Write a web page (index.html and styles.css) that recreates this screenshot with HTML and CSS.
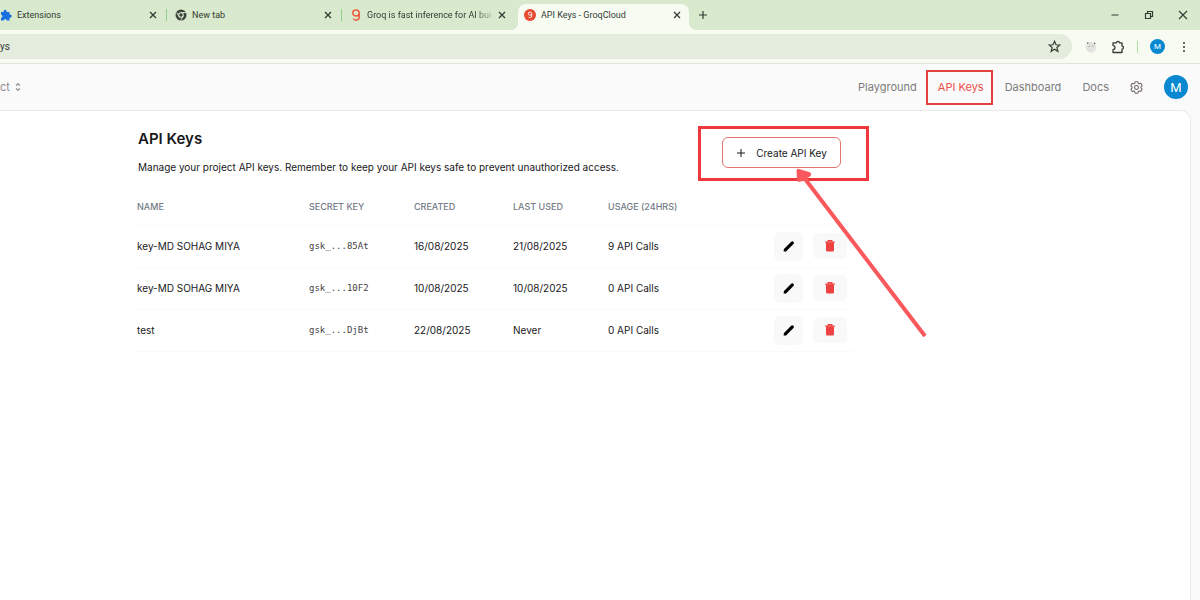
FILE: index.html
```html
<!DOCTYPE html>
<html lang="en">
<head>
<meta charset="utf-8">
<meta name="viewport" content="width=device-width, initial-scale=1">
<title>API Keys - GroqCloud</title>
<link rel="stylesheet" href="styles.css">
</head>
<body>
<svg class="defs" aria-hidden="true">
  <symbol id="close" viewBox="0 0 10 10"><path d="M2 2l6 6M8 2l-6 6" fill="none" stroke="currentColor" stroke-width="1.3"/></symbol>
  <symbol id="pencil" viewBox="0 0 14 14"><path d="M3.400 10.800L10.300 3.900" fill="none" stroke="currentColor" stroke-width="3.200" stroke-linecap="round"/><path d="M1.600 12.500l.6-3 2.500 2.400z" fill="currentColor"/></symbol>
  <symbol id="trash" viewBox="0 0 12 14"><path d="M1.200 3.200h9.600M4.200 3V1.700h3.600V3" fill="none" stroke="currentColor" stroke-width="1.300"/><path d="M2 3.500h8V11q0 1.500-1.500 1.500h-5Q2 12.500 2 11z" fill="currentColor"/></symbol>
</svg>

<header class="browser">
  <div class="tabstrip">
    <div class="tab tab-first">
      <svg class="tab-icon" viewBox="0 0 12 12"><path d="M1 3h2.600a1.600 1.600 0 1 1 3 0H9.500v2.600a1.600 1.600 0 1 1 0 3V11.500H6.700a1.500 1.500 0 0 0-3 0H1V8.700a1.500 1.500 0 0 0 0-3z" fill="#1a6fe0"/></svg>
      <span class="tab-title">Extensions</span>
      <button class="tab-close" aria-label="Close Extensions"><svg><use href="#close"/></svg></button>
    </div>
    <div class="tab">
      <svg class="tab-icon" viewBox="0 0 12 12"><circle cx="6" cy="6" r="5.500" fill="#3b433b"/><circle cx="6" cy="6" r="2.300" fill="none" stroke="#d8e9cd" stroke-width="1.100"/><path d="M6 3.500h5M3.800 7.200L1.600 3.400M8.100 7.300L5.700 11.400" stroke="#d8e9cd" stroke-width=".9"/></svg>
      <span class="tab-title">New tab</span>
      <button class="tab-close" aria-label="Close New tab"><svg><use href="#close"/></svg></button>
    </div>
    <div class="tab tab-plain">
      <svg class="tab-icon" viewBox="0 0 12 12"><path d="M9.200 4a3.200 3 0 1 0-6.400 0a3.200 3 0 1 0 6.400 0V8a3.200 3.200 0 0 1-6 1.500" fill="none" stroke="#ee5a40" stroke-width="1.500"/></svg>
      <span class="tab-title tab-fade">Groq is fast inference for AI bui</span>
      <button class="tab-close" aria-label="Close Groq"><svg><use href="#close"/></svg></button>
    </div>
    <div class="tab tab-active">
      <svg class="tab-icon" viewBox="0 0 12 12"><circle cx="6" cy="6" r="6" fill="#e9492f"/><path d="M7.700 4.600a1.700 1.600 0 1 0-3.400 0a1.700 1.600 0 1 0 3.400 0V7a1.700 1.700 0 0 1-3.200.8" fill="none" stroke="#fff" stroke-width=".9"/></svg>
      <span class="tab-title">API Keys - GroqCloud</span>
      <button class="tab-close" aria-label="Close API Keys"><svg><use href="#close"/></svg></button>
    </div>
    <button class="new-tab" aria-label="New tab"><svg viewBox="0 0 10 10"><path d="M5 1v8M1 5h8" stroke="currentColor" stroke-width="1.200"/></svg></button>
    <div class="window-controls">
      <button aria-label="Minimize"><svg viewBox="0 0 10 10"><path d="M1.500 5h7" stroke="currentColor"/></svg></button>
      <button aria-label="Restore"><svg viewBox="0 0 10 10"><path d="M1.500 3.500h5v5h-5zM3.500 3.300V1.500h5v5H6.700" fill="none" stroke="currentColor" stroke-width="1.200"/></svg></button>
      <button aria-label="Close window"><svg viewBox="0 0 10 10"><path d="M1 1l8 8M9 1L1 9" stroke="currentColor" stroke-width="1.100"/></svg></button>
    </div>
  </div>
  <div class="toolbar">
    <div class="address">
      <span class="url">ys</span>
      <button aria-label="Bookmark"><svg viewBox="0 0 12 12"><path d="M6 1.200l1.400 3.200 3.500.3-2.700 2.300.9 3.500L6 8.600l-3.100 1.900.9-3.500L1.100 4.700l3.500-.3z" fill="none" stroke="currentColor" stroke-width="1.100"/></svg></button>
    </div>
    <div class="tools">
      <button class="tool-face" aria-label="Extension"><svg viewBox="0 0 12 12"><circle cx="6" cy="6.200" r="5.400" fill="#e3e4df"/><path d="M2 2.200h1.300M9 2.400h1.300" stroke="#555855" stroke-width="1.300"/><path d="M3.500 5.500h1M7.300 5h1.200" stroke="#8b8e89" stroke-width="1.100"/></svg></button>
      <button class="tool-puzzle" aria-label="Extensions menu"><svg viewBox="0 0 14 14"><path d="M2 2.800h3.500a1.500 1.500 0 0 1 3 0H11v3.300a1.500 1.500 0 0 1 0 3V12.500H2V9.600a2 2 0 0 0 0-4z" fill="none" stroke="currentColor" stroke-width="1.300" stroke-linejoin="round"/></svg></button>
      <span class="tool-divider"></span>
      <button class="avatar avatar-small">M</button>
      <button class="tool-menu" aria-label="Browser menu"><svg viewBox="0 0 4 12"><circle cx="2" cy="2" r="1"/><circle cx="2" cy="6" r="1"/><circle cx="2" cy="10" r="1"/></svg></button>
    </div>
  </div>
</header>

<div class="app">
  <div class="app-header">
    <button class="project">ct<svg viewBox="0 0 8 12"><path d="M2 4.500l2-1.800 2 1.800M2 7.500l2 1.800 2-1.800" fill="none" stroke="currentColor" stroke-width="1.200"/></svg></button>
    <nav class="nav">
      <a href="#">Playground</a>
      <a href="#" class="current">API Keys<span class="mark mark-nav"></span></a>
      <a href="#">Dashboard</a>
      <a href="#">Docs</a>
      <button class="settings" aria-label="Settings"><svg viewBox="2 2 20 20"><path d="M9.600 3.900c.1-.5.5-.9 1.100-.9h2.600c.5 0 1 .4 1.100.9l.2 1.300c.1.400.3.700.6.900l.2.100c.3.200.7.200 1.100.1l1.200-.5c.5-.2 1.100 0 1.400.5l1.300 2.200c.3.500.2 1.100-.3 1.400l-1 .8c-.3.200-.4.600-.4 1v.3c0 .4.100.8.400 1l1 .8c.4.300.5.900.3 1.400l-1.300 2.200c-.3.500-.9.700-1.400.5l-1.200-.5c-.4-.1-.8-.1-1.100.1l-.2.100c-.3.200-.5.500-.6.900l-.2 1.300c-.1.500-.6.900-1.100.9h-2.600c-.6 0-1-.4-1.100-.9l-.2-1.300c-.1-.4-.3-.7-.6-.9l-.2-.1c-.3-.2-.7-.2-1.100-.1l-1.200.5c-.5.200-1.100 0-1.400-.5l-1.300-2.200c-.2-.5-.1-1.100.3-1.400l1-.8c.3-.2.4-.6.4-1v-.3c0-.4-.1-.8-.4-1l-1-.8c-.5-.3-.6-.9-.3-1.400l1.300-2.200c.3-.5.9-.7 1.400-.5l1.200.5c.4.100.8.100 1.100-.1l.2-.1c.3-.2.5-.5.6-.9z" fill="none" stroke="currentColor" stroke-width="1.600"/><circle cx="12" cy="12" r="3" fill="none" stroke="currentColor" stroke-width="1.600"/></svg></button>
      <button class="avatar">M</button>
    </nav>
  </div>

  <main class="panel">
    <div class="content">
      <div class="intro">
        <div>
          <h1>API Keys</h1>
          <p>Manage your project API keys. Remember to keep your API keys safe to prevent unauthorized access.</p>
        </div>
        <div class="create-wrap">
          <button class="create"><svg viewBox="0 0 10 10"><path d="M5 1v8M1 5h8" stroke="currentColor"/></svg>Create API Key</button>
          <span class="mark mark-create"></span>
          <svg class="arrow" viewBox="0 0 130 170" aria-hidden="true"><path d="M5 7L128 168" stroke="#f9595d" stroke-width="4"/><path d="M2 1L12 4q4 1.500 1 4.500L4 13.500q-4 1.500-4-2L-.500 3Q0 0 2 1z" fill="#f9595d"/></svg>
        </div>
      </div>

      <table class="keys">
        <colgroup><col class="c-name"><col class="c-secret"><col class="c-created"><col class="c-used"><col class="c-usage"><col></colgroup>
        <thead>
          <tr><th>NAME</th><th>SECRET KEY</th><th>CREATED</th><th>LAST USED</th><th>USAGE (24HRS)</th><td></td></tr>
        </thead>
        <tbody>
          <tr><td>key-MD SOHAG MIYA</td><td class="secret">gsk_...85At</td><td>16/08/2025</td><td>21/08/2025</td><td>9 API Calls</td>
            <td><div class="actions"><button class="edit" aria-label="Edit"><svg><use href="#pencil"/></svg></button><button class="delete" aria-label="Delete"><svg><use href="#trash"/></svg></button></div></td></tr>
          <tr><td>key-MD SOHAG MIYA</td><td class="secret">gsk_...10F2</td><td>10/08/2025</td><td>10/08/2025</td><td>0 API Calls</td>
            <td><div class="actions"><button class="edit" aria-label="Edit"><svg><use href="#pencil"/></svg></button><button class="delete" aria-label="Delete"><svg><use href="#trash"/></svg></button></div></td></tr>
          <tr><td>test</td><td class="secret">gsk_...DjBt</td><td>22/08/2025</td><td>Never</td><td>0 API Calls</td>
            <td><div class="actions"><button class="edit" aria-label="Edit"><svg><use href="#pencil"/></svg></button><button class="delete" aria-label="Delete"><svg><use href="#trash"/></svg></button></div></td></tr>
        </tbody>
      </table>
    </div>
  </main>
</div>
</body>
</html>
```
FILE: styles.css
```css
* { box-sizing: border-box; }

body {
  margin: 0;
  min-height: 100vh;
  display: flex;
  flex-direction: column;
  background: #fafafa;
  color: #18181b;
  font-family: Inter, sans-serif;
  font-size: 10px;
  overflow-x: hidden;
}

button {
  display: flex;
  align-items: center;
  justify-content: center;
  padding: 0;
  border: 0;
  background: none;
  color: inherit;
  font: inherit;
}

.defs { position: absolute; width: 0; height: 0; }

/* Browser frame */
.browser {
  font-family: Roboto, sans-serif;
  font-size: 9px;
  color: #333b33;
  border-bottom: 1px solid #dfe6d8;
}

.tabstrip { display: flex; height: 30px; background: #d8e9cd; }

.tab {
  position: relative;
  display: flex;
  align-items: center;
  flex: 0 0 175px;
  min-width: 0;
  padding: 0 9px 0 8px;
  gap: 5px;
}
.tab::after {
  content: "";
  position: absolute;
  right: 0;
  top: 9px;
  width: 1px;
  height: 12px;
  background: #8fce87;
}
.tab-first { flex-basis: 167px; padding-left: 0; }
.tab-plain { padding-right: 10px; }
.tab-plain::after { display: none; }
.tab-icon { flex: none; width: 12px; height: 12px; }
.tab-title { flex: 1; min-width: 0; white-space: nowrap; }
.tab-fade { -webkit-mask-image: linear-gradient(to right, #000 85%, transparent 105%); mask-image: linear-gradient(to right, #000 85%, transparent 105%); }
.tab-close { flex: none; }
.tab-close svg { width: 10px; height: 10px; }

.tab-active {
  flex-basis: 171px;
  margin: 4px 0 0 1px;
  padding: 0 7px 4px 6px;
  border-radius: 8px 8px 0 0;
  background: #f7fbf2;
}
.tab-active::before,
.tab-active::after {
  content: "";
  display: block;
  position: absolute;
  top: auto;
  bottom: 0;
  width: 8px;
  height: 8px;
}
.tab-active::before { left: -8px; background: radial-gradient(circle at 0 0, #d8e9cd 8px, #f7fbf2 8px); }
.tab-active::after { right: -8px; background: radial-gradient(circle at 100% 0, #d8e9cd 8px, #f7fbf2 8px); }

.new-tab { width: 28px; }
.new-tab svg { width: 10px; height: 10px; }

.window-controls { display: flex; margin-left: auto; }
.window-controls button { width: 34px; }
.window-controls svg { width: 10px; height: 10px; }

.toolbar {
  display: flex;
  align-items: center;
  height: 33px;
  padding-right: 14px;
  background: #f7fbf2;
}
.address {
  display: flex;
  align-items: center;
  justify-content: space-between;
  flex: 1;
  height: 25px;
  padding-right: 11px;
  border-radius: 0 13px 13px 0;
  background: #e4ecdd;
}
.url { font-size: 10px; }
.address svg { width: 13px; height: 13px; }
.tools { display: flex; align-items: center; margin-left: 13px; }
.tool-face svg { width: 12px; height: 12px; }
.tool-puzzle { margin-left: 14px; }
.tool-puzzle svg { width: 14px; height: 14px; }
.tool-divider { width: 1px; height: 12px; margin: 0 12px 0 12px; background: #a6e59b; }
.tool-menu { margin-left: 17px; }
.tool-menu svg { width: 4px; height: 12px; fill: currentColor; }

.avatar {
  width: 24px;
  height: 24px;
  border-radius: 50%;
  background: #0788d1;
  color: #fff;
  font-family: Roboto, sans-serif;
  font-size: 13px;
}
.avatar-small { width: 15px; height: 15px; font-size: 8px; }

/* Application */
.app { flex: 1; display: flex; flex-direction: column; }

.app-header {
  display: flex;
  align-items: center;
  justify-content: space-between;
  height: 46px;
  padding-right: 12px;
}
.project { gap: 4px; color: #8c8c8f; font-size: 11px; }
.project svg { width: 8px; height: 12px; }

.nav { display: flex; align-items: center; gap: 21px; color: #7c7c7c; }
.nav a { position: relative; color: inherit; font-size: 11px; text-decoration: none; }
.nav .current { color: #ea4e48; }
.settings svg { width: 13px; height: 13px; color: #6b6461; }

.panel {
  flex: 1;
  margin-right: 9px;
  padding: 18px 24px 24px 137px;
  border: solid #e9e9e9;
  border-width: 1px 1px 0 0;
  border-radius: 0 10px 0 0;
  background: #fff;
}
.content { max-width: 715px; }

.intro {
  display: flex;
  align-items: flex-start;
  justify-content: space-between;
  padding: 0 11px 0 1px;
}
h1 { margin: 0; font-size: 15px; line-height: 20px; font-weight: 600; }
p { margin: 10px 0 0; font-size: 10px; line-height: 16px; }

.create-wrap { position: relative; flex: none; padding-top: 8px; }
.create {
  width: 119px;
  height: 31px;
  gap: 10px;
  border: 1px solid #e0766f;
  border-radius: 6px;
  background: #fff;
}
.create svg { width: 10px; height: 10px; }

.keys { width: 100%; margin-top: 14px; border-collapse: collapse; table-layout: fixed; }
.c-name { width: 172px; }
.c-secret { width: 105px; }
.c-created { width: 99px; }
.c-used { width: 95px; }
.c-usage { width: 166px; }
.keys tr { height: 42px; border-bottom: 1px solid #f9f9f9; }
.keys thead tr { height: 36px; }
.keys th, .keys td { padding: 0; text-align: left; white-space: nowrap; }
.keys th { color: #737b86; font-size: 9px; font-weight: 500; }
.keys td { font-size: 10px; }
.keys .secret { color: #444; font-family: "DejaVu Sans Mono", monospace; font-size: 9px; }

.actions { display: flex; align-items: center; gap: 10px; }
.actions button { border-radius: 6px; background: #f9f9f9; }
.edit { width: 29px; height: 29px; color: #000; }
.delete { width: 34px; height: 26px; color: #ee4141; }
.edit svg { width: 14px; height: 14px; }
.delete svg { width: 12px; height: 14px; }

/* Annotations drawn over the interface */
.mark { position: absolute; pointer-events: none; }
.mark-nav { inset: -10px -9px -11px -12px; border: 2px solid #e34140; }
.mark-create { inset: -3px -28px -13px -24px; border: 3px solid #ee383b; }
.arrow { position: absolute; left: 75px; top: 39px; width: 130px; height: 170px; overflow: visible; pointer-events: none; }
```
